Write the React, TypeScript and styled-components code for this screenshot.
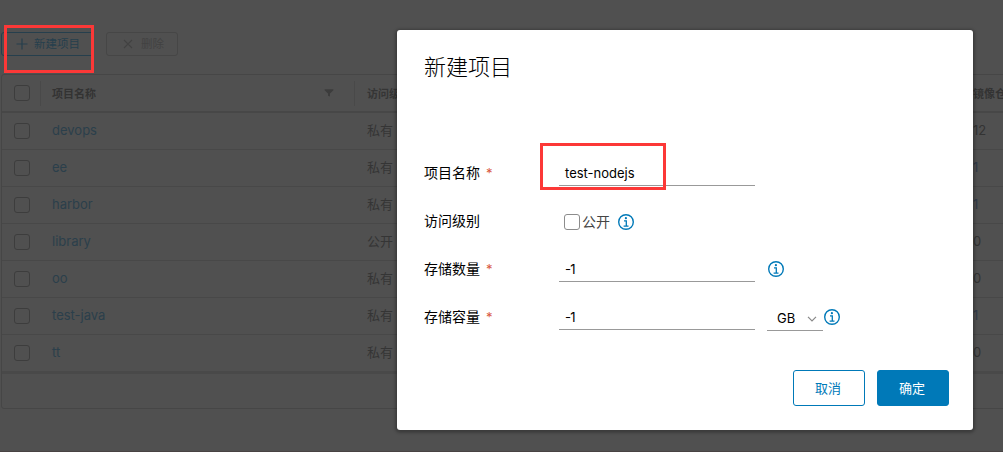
import React from "react";
import styled, { createGlobalStyle } from "styled-components";

const GlobalStyle = createGlobalStyle`
  * { box-sizing: border-box; }
  body {
    margin: 0;
    background: #505050;
    font-family: Inter, "Noto Sans CJK SC", sans-serif;
    font-size: 13px;
    overflow: hidden;
  }
`;

const Page = styled.div`
  position: relative;
  width: 1003px;
  height: 452px;
  overflow: hidden;
  background: #505050;
  border-bottom: 1px solid #484343;
`;

const Toolbar = styled.div`
  display: flex;
  gap: 12px;
  padding: 32px 0 0 1px;
`;

const ToolButton = styled.button<{ $width: number; $tone: string; $line: string }>`
  display: flex;
  align-items: center;
  gap: 6px;
  width: ${(p) => p.$width}px;
  height: 24px;
  padding: 0 0 0 14px;
  font: 400 11.5px/22px Inter, "Noto Sans CJK SC", sans-serif;
  color: ${(p) => p.$tone};
  background: transparent;
  border: 1px solid ${(p) => p.$line};
  border-radius: 3px;
  white-space: nowrap;
`;

const Grid = styled.div`
  width: 1010px;
  height: 335px;
  margin: 18px 0 0 1px;
  border: 1px solid #464646;
  border-radius: 3px;
`;

const Row = styled.div`
  display: flex;
  align-items: center;
  height: 37px;
  border-bottom: 1px solid #484848;
  & > * { flex: none; }
  &:last-child { border-bottom: 3px solid #494949; height: 39px; }
`;

const HeaderRow = styled(Row)`
  height: 38px;
  border-bottom: 2px solid #474747;
  font-size: 11px;
  font-weight: 700;
  color: #333;
`;

const CheckCell = styled.div<{ $ruled?: boolean }>`
  display: flex;
  align-items: center;
  width: 39px;
  height: 25px;
  padding-left: 12px;
  border-right: 1px solid ${(p) => (p.$ruled ? "#494949" : "transparent")};
`;

const Checkbox = styled.span<{ $line: string }>`
  flex: none;
  width: 16px;
  height: 16px;
  border: 1px solid ${(p) => p.$line};
  border-radius: 3px;
`;

const NameCell = styled.div<{ $ruled?: boolean }>`
  display: flex;
  align-items: center;
  justify-content: space-between;
  width: 314px;
  height: 25px;
  padding: 0 20px 0 11px;
  border-right: 1px solid ${(p) => (p.$ruled ? "#494949" : "transparent")};
`;

const LinkText = styled.span`
  padding-bottom: 2px;
  color: #2b3f4b;
`;

const LevelCell = styled.div<{ $lift?: number }>`
  width: 617px;
  padding: 0 0 ${(p) => p.$lift ?? 0}px 12px;
  color: #353535;
  white-space: nowrap;
`;

const CountCell = styled.div<{ $tone?: string; $lift?: number }>`
  padding-bottom: ${(p) => p.$lift ?? 0}px;
  padding-left: 1px;
  white-space: nowrap;
  color: ${(p) => p.$tone ?? "#333"};
`;

const Dialog = styled.div`
  position: absolute;
  left: 397px;
  top: 30px;
  width: 576px;
  height: 400px;
  padding: 22px 24px 24px 27px;
  display: flex;
  flex-direction: column;
  background: #fff;
  border-radius: 3px;
  box-shadow: 0 1px 3px 2px rgba(0, 0, 0, 0.25);
  color: #000;
`;

const Title = styled.h3`
  margin: 0 0 67px;
  font: 300 22px/30px Inter, "Noto Sans CJK SC", sans-serif;
`;

const Field = styled.div`
  display: flex;
  height: 48px;
`;

const Label = styled.label`
  width: 135px;
  font-size: 14px;
  line-height: 48px;
`;

const Star = styled.span`
  margin-left: 6px;
  font-size: 13px;
  color: #d9583f;
`;

const Value = styled.div`
  width: 196px;
  height: 24px;
  margin-top: 13px;
  padding-left: 6px;
  line-height: 22px;
  border-bottom: 1px solid #999;
`;

const Amount = styled(Value)`
  letter-spacing: -0.8px;
`;

const Select = styled.div`
  display: flex;
  align-items: center;
  justify-content: space-between;
  width: 56px;
  height: 24px;
  margin: 14px 0 0 12px;
  padding: 0 6px 0 10px;
  border-bottom: 1px solid #999;
`;

const SelectText = styled.span`
  padding-bottom: 2px;
`;

const PublicOption = styled.div`
  display: flex;
  align-items: center;
  height: 48px;
  padding: 2px 0 0 5px;
  gap: 2px;
  font-size: 14px;
  color: #454545;
`;

const OptionText = styled.span`
  padding-bottom: 2px;
`;

const InfoSlot = styled.span<{ $left: number; $top?: number }>`
  display: flex;
  margin: ${(p) => p.$top ?? 0}px 0 0 ${(p) => p.$left}px;
`;

const Actions = styled.div`
  display: flex;
  justify-content: flex-end;
  gap: 12px;
  margin-top: auto;
`;

const ActionButton = styled.button<{ $primary?: boolean }>`
  width: 72px;
  height: 36px;
  padding: 0 2px 0 0;
  font: 400 13px/34px Inter, "Noto Sans CJK SC", sans-serif;
  color: ${(p) => (p.$primary ? "#fff" : "#0079b8")};
  background: ${(p) => (p.$primary ? "#0079b8" : "#fff")};
  border: 1px solid #0079b8;
  border-radius: 3px;
`;

const Marker = styled.div<{ $x: number; $y: number; $w: number; $h: number }>`
  position: absolute;
  left: ${(p) => p.$x}px;
  top: ${(p) => p.$y}px;
  width: ${(p) => p.$w}px;
  height: ${(p) => p.$h}px;
  border: 3px solid #fc3837;
`;

const Info = () => (
  <svg width="16" height="16" viewBox="0 0 16 16" fill="none" stroke="#0079b8">
    <circle cx="8" cy="8" r="7.3" strokeWidth="1.4" />
    <circle cx="7.9" cy="4.2" r="1.1" fill="#0079b8" stroke="none" />
    <path d="M6 6.8h2.3v5M5.6 12.1h4.9" strokeWidth="1.3" />
  </svg>
);

const projects = [
  { name: "devops", level: "私有", count: "12" },
  { name: "ee", level: "私有", count: "1" },
  { name: "harbor", level: "私有", count: "1" },
  { name: "library", level: "公开", count: "0" },
  { name: "oo", level: "私有", count: "0" },
  { name: "test-java", level: "私有", count: "1" },
  { name: "tt", level: "私有", count: "0" },
];

export default function App() {
  return (
    <Page>
      <GlobalStyle />
      <Toolbar>
        <ToolButton $width={93} $tone="#263f4d" $line="#263f4d">
          <svg width="12" height="12" viewBox="0 0 12 12" stroke="currentColor" strokeWidth="1.2">
            <path d="M6 .5v11M.5 6h11" />
          </svg>
          新建项目
        </ToolButton>
        <ToolButton $width={72} $tone="#424242" $line="#464646">
          <svg width="14" height="12" viewBox="0 0 14 12" stroke="currentColor" strokeWidth="1.1">
            <path d="M3 2l8 8M11 2l-8 8" />
          </svg>
          删除
        </ToolButton>
      </Toolbar>
      <Grid>
        <HeaderRow>
          <CheckCell $ruled><Checkbox $line="#3d3d3d" /></CheckCell>
          <NameCell $ruled>
            项目名称
            <svg width="10" height="8" viewBox="0 0 10 8" fill="#3c3c3c">
              <path d="M.6.3h8.8v1L6 4.6v3L4 6.8V4.6L.6 1.3z" />
            </svg>
          </NameCell>
          <LevelCell>访问级别</LevelCell>
          <CountCell>镜像仓</CountCell>
        </HeaderRow>
        {projects.map((p) => (
          <Row key={p.name}>
            <CheckCell><Checkbox $line="#3d3d3d" /></CheckCell>
            <NameCell><LinkText>{p.name}</LinkText></NameCell>
            <LevelCell $lift={3}>{p.level}</LevelCell>
            <CountCell $lift={2} $tone={p.count === "1" ? "#303a48" : "#333"}>{p.count}</CountCell>
          </Row>
        ))}
      </Grid>
      <Dialog>
        <Title>新建项目</Title>
        <Field>
          <Label>项目名称<Star>*</Star></Label>
          <Value>test-nodejs</Value>
        </Field>
        <Field>
          <Label>访问级别</Label>
          <PublicOption>
            <Checkbox $line="#8c8c8c" />
            <OptionText>公开</OptionText>
            <InfoSlot $left={6}><Info /></InfoSlot>
          </PublicOption>
        </Field>
        <Field>
          <Label>存储数量<Star>*</Star></Label>
          <Amount>-1</Amount>
          <InfoSlot $left={13} $top={16}><Info /></InfoSlot>
        </Field>
        <Field>
          <Label>存储容量<Star>*</Star></Label>
          <Amount>-1</Amount>
          <Select>
            <SelectText>GB</SelectText>
            <svg width="10" height="6" viewBox="0 0 10 6" fill="none" stroke="#888" strokeWidth="1.2">
              <path d="M1 .8l4 4 4-4" />
            </svg>
          </Select>
          <InfoSlot $left={1} $top={16}><Info /></InfoSlot>
        </Field>
        <Actions>
          <ActionButton>取消</ActionButton>
          <ActionButton $primary>确定</ActionButton>
        </Actions>
      </Dialog>
      <Marker $x={4} $y={25} $w={90} $h={48} />
      <Marker $x={540} $y={143} $w={126} $h={47} />
    </Page>
  );
}
